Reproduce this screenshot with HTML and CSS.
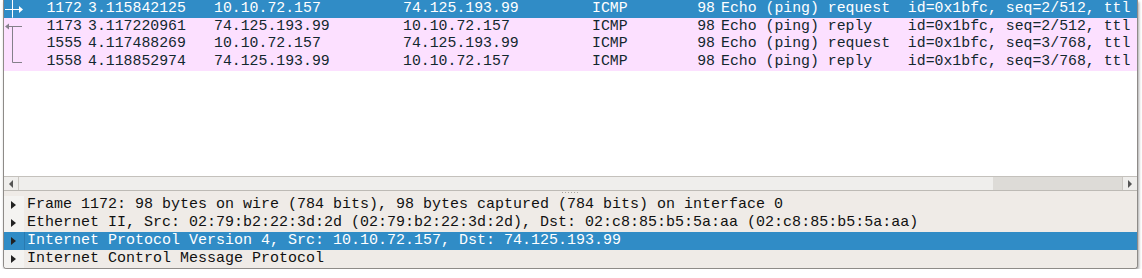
FILE: index.html
```html
<!DOCTYPE html>
<html>
<head>
<meta charset="utf-8">
<link rel="stylesheet" href="styles.css">
</head>
<body>
<div class="window">
  <div class="packet-list">
    <svg class="related" width="20" height="72" viewBox="0 0 20 72">
      <g stroke="#ffffff" stroke-width="1" fill="none">
        <line x1="1" y1="9.5" x2="15.5" y2="9.5"/>
        <line x1="8.5" y1="0" x2="8.5" y2="17.7"/>
      </g>
      <polygon points="15,6 19,9.5 15,13" fill="#ffffff"/>
      <g stroke="#84808a" stroke-width="1" fill="none">
        <line x1="4.5" y1="26.5" x2="18" y2="26.5"/>
        <line x1="8.5" y1="26.5" x2="8.5" y2="62.5"/>
        <line x1="8.5" y1="62.5" x2="18" y2="62.5"/>
      </g>
      <polygon points="1,26.5 5,23.5 5,29.5" fill="#84808a"/>
    </svg>
    <div class="row selected">
      <div class="cell num">1172</div><div class="cell">3.115842125</div><div class="cell">10.10.72.157</div><div class="cell">74.125.193.99</div><div class="cell">ICMP</div><div class="cell num">98</div><div class="cell info">Echo (ping) request  id=0x1bfc, seq=2/512, ttl</div>
    </div>
    <div class="row">
      <div class="cell num">1173</div><div class="cell">3.117220961</div><div class="cell">74.125.193.99</div><div class="cell">10.10.72.157</div><div class="cell">ICMP</div><div class="cell num">98</div><div class="cell info">Echo (ping) reply    id=0x1bfc, seq=2/512, ttl</div>
    </div>
    <div class="row">
      <div class="cell num">1555</div><div class="cell">4.117488269</div><div class="cell">10.10.72.157</div><div class="cell">74.125.193.99</div><div class="cell">ICMP</div><div class="cell num">98</div><div class="cell info">Echo (ping) request  id=0x1bfc, seq=3/768, ttl</div>
    </div>
    <div class="row">
      <div class="cell num">1558</div><div class="cell">4.118852974</div><div class="cell">74.125.193.99</div><div class="cell">10.10.72.157</div><div class="cell">ICMP</div><div class="cell num">98</div><div class="cell info">Echo (ping) reply    id=0x1bfc, seq=3/768, ttl</div>
    </div>
  </div>
  <div class="hscroll">
    <div class="sb-btn left"><span class="tri-left"></span></div>
    <div class="sb-track"><div class="sb-thumb"></div><div class="sb-rest"></div></div>
    <div class="sb-btn right"><span class="tri-right"></span></div>
  </div>
  <div class="splitter"><span class="dots"></span></div>
  <div class="details">
    <div class="drow"><div class="exp"><span class="tri"></span></div><div class="dtext">Frame 1172: 98 bytes on wire (784 bits), 98 bytes captured (784 bits) on interface 0</div></div>
    <div class="drow"><div class="exp"><span class="tri"></span></div><div class="dtext">Ethernet II, Src: 02:79:b2:22:3d:2d (02:79:b2:22:3d:2d), Dst: 02:c8:85:b5:5a:aa (02:c8:85:b5:5a:aa)</div></div>
    <div class="drow selected"><div class="exp"><span class="tri"></span></div><div class="dtext">Internet Protocol Version 4, Src: 10.10.72.157, Dst: 74.125.193.99</div></div>
    <div class="drow"><div class="exp"><span class="tri"></span></div><div class="dtext">Internet Control Message Protocol</div></div>
  </div>
</div>
</body>
</html>
```
FILE: styles.css
```css
body {
  margin: 0;
  background: #ffffff;
  font-family: "Liberation Mono", "DejaVu Sans Mono", monospace;
}

.window {
  margin-left: 3px;
  width: 1135px;
  height: 269px;
  box-sizing: border-box;
  border: 1px solid #8e8b88;
  border-top: none;
  border-radius: 0 0 4px 4px;
  box-shadow: 1px 2px 3px rgba(0, 0, 0, 0.35);
  overflow: hidden;
  background: #efebe7;
}

.packet-list {
  position: relative;
  height: 176px;
  background: #ffffff;
  overflow: hidden;
}

.related {
  position: absolute;
  left: 0;
  top: 0;
}

.row {
  display: grid;
  grid-template-columns: 81px 126px 189px 189px 71px 58px 1fr;
  height: 17.7px;
  line-height: 17.7px;
  font-size: 14.83px;
  color: #12272e;
  background: #fce0ff;
  white-space: pre;
}

.row.selected {
  background: #308cc6;
  color: #ffffff;
}

.cell {
  padding: 0 3px;
  min-width: 0;
  overflow: hidden;
}

.cell.num {
  text-align: right;
}

.hscroll {
  display: flex;
  height: 15px;
  box-sizing: border-box;
  border-top: 1px solid #c4c1bc;
  border-bottom: 1px solid #bdbab5;
  background: #eeedeb;
}

.sb-btn {
  width: 14px;
  display: flex;
  align-items: center;
  justify-content: center;
  background: #efeeec;
}

.sb-btn.left {
  border-right: 1px solid #cac7c2;
}

.sb-btn.right {
  border-left: 1px solid #cac7c2;
}

.tri-left {
  width: 0;
  height: 0;
  border-top: 4px solid transparent;
  border-bottom: 4px solid transparent;
  border-right: 4px solid #555555;
}

.tri-right {
  width: 0;
  height: 0;
  border-top: 4px solid transparent;
  border-bottom: 4px solid transparent;
  border-left: 4px solid #555555;
}

.sb-track {
  flex: 1;
  display: flex;
}

.sb-thumb {
  width: 974px;
  background: #efeeec;
}

.sb-rest {
  flex: 1;
  background: #dddbd7;
}

.splitter {
  height: 5px;
  display: flex;
  justify-content: center;
  padding-top: 1px;
  box-sizing: border-box;
  background: #efebe7;
}

.dots {
  width: 17px;
  height: 1px;
  background: repeating-linear-gradient(to right, #a8a5a0 0 1px, transparent 1px 3px);
}

.details {
  height: 72px;
  background: #efebe7;
}

.drow {
  display: flex;
  height: 18px;
  line-height: 18px;
  font-size: 15px;
  color: #111111;
  white-space: pre;
}

.exp {
  width: 20px;
  flex: none;
  display: flex;
  align-items: center;
  padding-left: 7px;
  box-sizing: border-box;
  background: #f4f3f1;
}

.tri {
  width: 0;
  height: 0;
  border-top: 4px solid transparent;
  border-bottom: 4px solid transparent;
  border-left: 5px solid #222222;
}

.dtext {
  flex: 1;
  padding-left: 3px;
  overflow: hidden;
}

.drow.selected .exp,
.drow.selected .dtext {
  background: #308cc6;
}

.drow.selected .dtext {
  color: #ffffff;
  border-left: 1px solid #2a7ab0;
  padding-left: 2px;
}
```
